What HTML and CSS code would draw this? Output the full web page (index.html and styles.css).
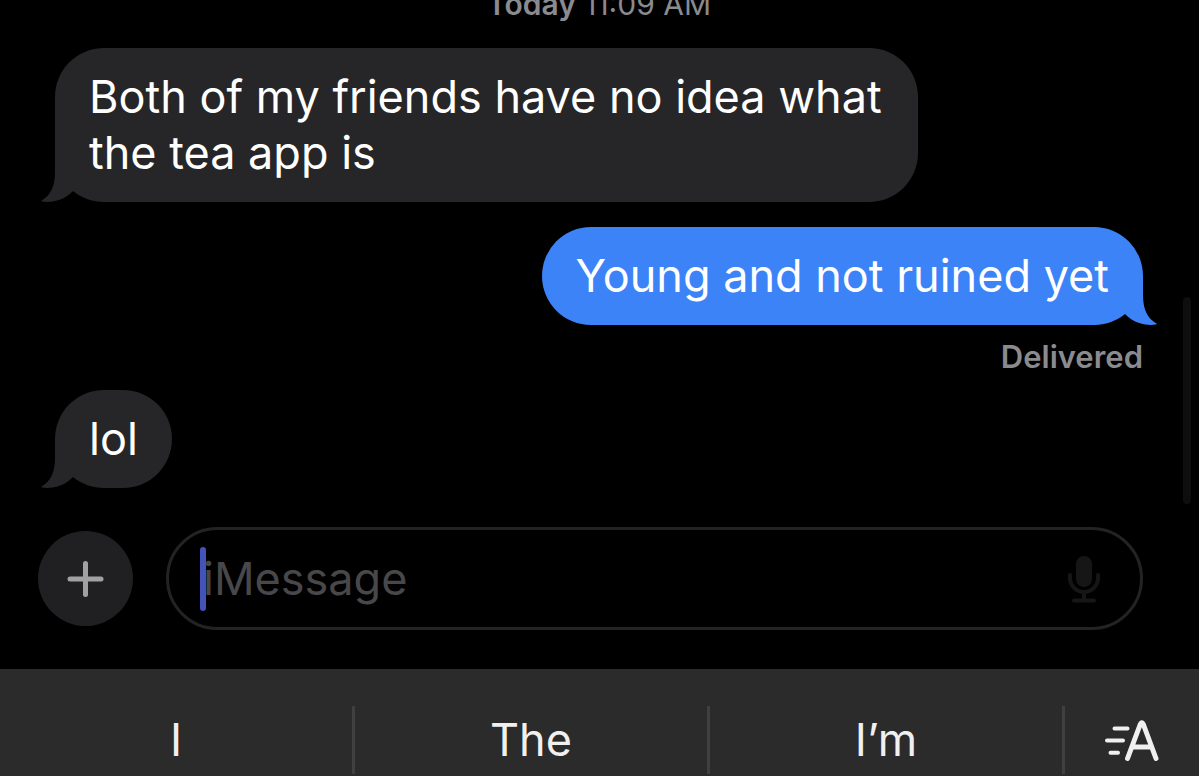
FILE: index.html
```html
<!DOCTYPE html>
<html lang="en">
<head>
<meta charset="utf-8">
<title>Messages</title>
<link rel="stylesheet" href="styles.css">
</head>
<body>
<main class="thread">
  <p class="timestamp"><strong>Today</strong> 11:09 AM</p>
  <div class="bubble received">
    Both of my friends have no idea what the tea app is
    <svg class="tail" viewBox="0 0 40 50" aria-hidden="true"><path d="M15 0V20C15 34 11 43 1 49C1 50 20 53 33 39L40 20V0Z"/></svg>
  </div>
  <div class="bubble sent">
    Young and not ruined yet
    <svg class="tail" viewBox="0 0 40 50" aria-hidden="true"><path d="M15 0V20C15 34 11 43 1 49C1 50 20 53 33 39L40 20V0Z"/></svg>
  </div>
  <p class="status">Delivered</p>
  <div class="bubble received">
    lol
    <svg class="tail" viewBox="0 0 40 50" aria-hidden="true"><path d="M15 0V20C15 34 11 43 1 49C1 50 20 53 33 39L40 20V0Z"/></svg>
  </div>
  <span class="scrollbar"></span>
</main>
<form class="composer">
  <button class="add" type="button" aria-label="Add attachment">
    <svg width="38" height="38" viewBox="0 0 38 38" aria-hidden="true"><path d="M18.500 3.500V34.500M3 19H34"/></svg>
  </button>
  <div class="field">
    <input class="input" type="text" placeholder="iMessage" aria-label="iMessage">
    <span class="caret"></span>
    <button class="mic" type="button" aria-label="Dictate">
      <svg width="34" height="48" viewBox="0 0 34 48" aria-hidden="true"><rect x="10" y="1" width="16" height="31" rx="8"/><path d="M4 20V23A14 14 0 0 0 32 23V20M18 37V45M8 45.500H28"/></svg>
    </button>
  </div>
</form>
<section class="suggestions" aria-label="Keyboard suggestions">
  <button class="word" type="button">I</button>
  <button class="word" type="button">The</button>
  <button class="word" type="button">I’m</button>
  <button class="format" type="button" aria-label="Text formatting">
    <svg width="54" height="42" viewBox="0 0 54 42" aria-hidden="true"><path class="lines" d="M9.500 9.500H22.500M2 21.500H18M5.500 33.700H13"/><path class="letter" d="M22.500 39.500L35 6Q36.800 1.500 38.600 6L51 39.500M27.500 28H46.500"/></svg>
  </button>
</section>
</body>
</html>
```
FILE: styles.css
```css
* {
  box-sizing: border-box;
}

body {
  display: flex;
  flex-direction: column;
  height: 100vh;
  margin: 0;
  overflow: hidden;
  background: #000;
  color: #fff;
  font-family: Inter, "Liberation Sans", sans-serif;
  font-size: 45px;
  line-height: 56px;
}

button,
input {
  margin: 0;
  padding: 0;
  border: 0;
  background: none;
  color: inherit;
  font: inherit;
}

p {
  margin: 0;
}

.thread {
  position: relative;
  display: flex;
  flex: 1;
  flex-direction: column;
  justify-content: flex-end;
  min-height: 0;
  padding: 0 56px 39px 55px;
}

.timestamp {
  margin-bottom: 22px;
  color: #8a8a8f;
  font-size: 30px;
  line-height: 44px;
  text-align: center;
}

.timestamp strong {
  font-weight: 600;
}

.bubble {
  position: relative;
  max-width: 72vw;
  padding: 21px 34px;
  border-radius: 49px;
}

.received {
  align-self: flex-start;
  background: #262628;
  fill: #262628;
}

.sent {
  align-self: flex-end;
  margin-top: 25px;
  background: #3c83f7;
  fill: #3c83f7;
}

.tail {
  position: absolute;
  bottom: 0;
  left: -15px;
  width: 40px;
  height: 50px;
}

.sent .tail {
  right: -15px;
  left: auto;
  transform: scaleX(-1);
}

.status {
  margin: 14px 0 15px;
  color: #8a8a8f;
  font-size: 31px;
  font-weight: 600;
  line-height: 36px;
  text-align: right;
}

.scrollbar {
  position: absolute;
  right: 8px;
  bottom: 23px;
  width: 8px;
  height: 207px;
  border-radius: 4px;
  background: #0e0e0f;
}

.composer {
  display: flex;
  align-items: center;
  gap: 33px;
  padding: 0 56px 39px 38px;
}

.add {
  display: grid;
  place-items: center;
  width: 95px;
  height: 95px;
  border-radius: 50%;
  background: #202022;
}

.add path {
  fill: none;
  stroke: #a1a1a3;
  stroke-width: 5;
  stroke-linecap: round;
}

.field {
  position: relative;
  display: flex;
  flex: 1;
  align-items: center;
  height: 103px;
  padding: 0 40px 0 34px;
  border: 3px solid #232325;
  border-radius: 52px;
}

.input {
  flex: 1;
  min-width: 0;
  height: 64px;
  outline: 0;
}

.input::placeholder {
  color: #48484a;
  opacity: 1;
}

.caret {
  position: absolute;
  left: 31px;
  width: 6px;
  height: 64px;
  border-radius: 3px;
  background: #4453b8;
}

.mic svg {
  display: block;
}

.mic {
  fill: #161617;
}

.mic path {
  fill: none;
  stroke: #161617;
  stroke-width: 4;
  stroke-linecap: round;
}

.suggestions {
  display: flex;
  height: 107px;
  padding: 37px 0 2px;
  background: #2b2b2b;
  color: #f0f0f0;
}

.word {
  flex: 1;
  border-right: 3px solid #404040;
}

.format {
  display: grid;
  place-items: center;
  width: 134px;
}

.format path {
  fill: none;
  stroke: #f0f0f0;
  stroke-linecap: round;
  stroke-linejoin: round;
}

.lines {
  stroke-width: 4;
}

.letter {
  stroke-width: 5;
}
```
